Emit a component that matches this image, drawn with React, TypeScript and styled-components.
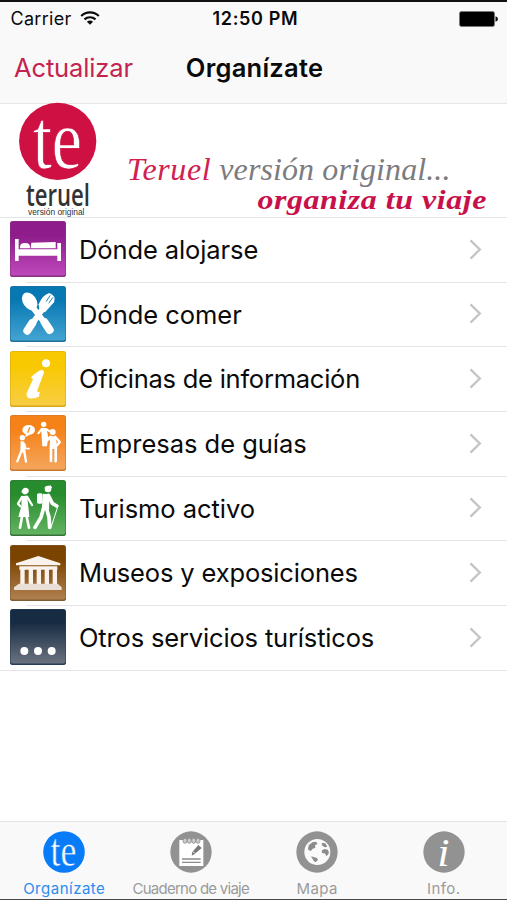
import React from 'react';
import styled, { createGlobalStyle } from 'styled-components';

const GlobalStyle = createGlobalStyle`
  * { box-sizing: border-box; }
  html, body { margin: 0; padding: 0; }
  body { background: #fff; font-family: Inter, 'Liberation Sans', sans-serif; color: #0a0a0a; }
  svg { display: block; flex: none; overflow: visible; }
`;

const Screen = styled.div`
  width: 507px;
  height: 900px;
  display: flex;
  flex-direction: column;
  overflow: hidden;
  background: #fff;
  border-top: 2px solid #141114;
  border-bottom: 1px solid #4a484a;
`;

const Header = styled.header`
  flex: none;
  height: 102px;
  background: #f9f9f9;
  border-bottom: 1px solid #e6e6e6;
`;

const StatusBar = styled.div`
  height: 32px;
  padding: 1px 9px 0 10.5px;
  display: grid;
  grid-template-columns: 202px 1fr auto;
  align-items: center;
`;

const Carrier = styled.div`
  display: flex;
  align-items: center;
  gap: 8px;
`;

const Label = styled.span<{ $size: number; $weight?: number; $spacing?: number; $color?: string }>`
  font-size: ${p => p.$size}px;
  font-weight: ${p => p.$weight ?? 400};
  letter-spacing: ${p => p.$spacing ?? 0}px;
  color: ${p => p.$color ?? '#0a0a0a'};
  line-height: 1.2;
  white-space: nowrap;
`;

const Battery = styled.div`
  justify-self: end;
`;

const NavBar = styled.div`
  height: 69px;
  padding: 0 12px 0 14px;
  display: grid;
  grid-template-columns: 1fr auto 1fr;
  align-items: center;
`;

const Banner = styled.section`
  flex: none;
  height: 114px;
  display: flex;
  border-bottom: 1px solid #e4e7e9;
`;

const Brand = styled.div`
  width: 127px;
  height: 113px;
  flex: none;
  padding-left: 15px;
  svg { margin-top: -2px; position: relative; }
`;

const Slogan = styled.div`
  flex: 1;
  padding-top: 50px;
  font-family: 'Liberation Serif', serif;
  font-style: italic;
`;

const SloganLine = styled.div<{ $strong?: boolean }>`
  line-height: 30px;
  height: ${p => (p.$strong ? 32 : 31)}px;
  font-size: ${p => (p.$strong ? 28 : 32)}px;
  font-weight: ${p => (p.$strong ? 700 : 400)};
  color: ${p => (p.$strong ? '#c8104a' : '#7c7c7f')};
  letter-spacing: ${p => (p.$strong ? 0.5 : 0.1)}px;
  text-align: ${p => (p.$strong ? 'right' : 'left')};
  padding-right: ${p => (p.$strong ? 20 : 0)}px;
  transform: ${p => (p.$strong ? 'scaleX(1.14)' : 'none')};
  transform-origin: 360px 50%;
  white-space: nowrap;
  em { color: #d1204f; letter-spacing: 0.6px; }
`;

const List = styled.ul`
  flex: 1;
  list-style: none;
  margin: 0;
  padding: 0;
`;

const Row = styled.li`
  height: 64.7px;
  padding: 0 25px 2.4px 10px;
  display: flex;
  align-items: center;
  gap: 13px;
  background: linear-gradient(#e4e4e6, #e4e4e6) 26px 100% / 100% 1px no-repeat;
  &:last-child { background-position: 0 100%; }
`;

const RowText = styled.div`
  flex: 1;
  padding-top: 2.2px;
`;

const Tile = styled.div<{ $top: string; $bottom: string; $edge: string }>`
  width: 56px;
  height: 56px;
  flex: none;
  border-radius: 3px;
  overflow: hidden;
  background: linear-gradient(${p => p.$top} 25%, ${p => p.$bottom});
  box-shadow: inset 0 0 0 1px ${p => p.$edge}88, inset 0 -1.5px 0 ${p => p.$edge};
`;

const TabBar = styled.nav`
  flex: none;
  height: 78px;
  padding-left: 1px;
  display: grid;
  grid-template-columns: repeat(4, 1fr);
  background: #f9f9f9;
  border-top: 1px solid #e2e2e2;
`;

const Tab = styled.div`
  display: flex;
  flex-direction: column;
  align-items: center;
  padding-top: 9px;
  gap: 7px;
`;

const Wifi = () => (
  <svg width="20" height="15" viewBox="0 0 20 15" fill="none" stroke="#0a0a0a" strokeWidth="2.2">
    <path d="M1.2 5C6.3 .2 13.7 .2 18.8 5" />
    <path d="M4.5 8.4C7.7 5.5 12.3 5.5 15.5 8.4" />
    <path d="M10 13.8 6.9 10.8Q10 8.4 13.1 10.8Z" fill="#0a0a0a" stroke="none" />
  </svg>
);

const BatteryIcon = () => (
  <svg width="39" height="16" viewBox="0 0 39 16">
    <rect x=".5" y=".5" width="35" height="15" rx="2" fill="#000" stroke="#777" />
    <path d="M36.5 5.2Q39 6 39 8T36.5 10.8Z" fill="#111" />
  </svg>
);

const Monogram = ({ size, color }: { size: number; color: string }) => (
  <svg width={size} height={size} viewBox="0 0 78 78">
    <circle cx="39" cy="39" r="38.6" fill={color} />
    <text transform="translate(14 65) scale(1 1.24)" fill="#fff" stroke={color} strokeWidth="0.8"
      fontFamily="'Liberation Serif', serif" fontSize="68" textLength="48" lengthAdjust="spacingAndGlyphs">te</text>
  </svg>
);

const Logo = () => (
  <svg width="84" height="115" viewBox="15 102 84 115">
    <circle cx="57.7" cy="141.3" r="38.6" fill="#cf1043" />
    <text transform="translate(33 167.5) scale(1 1.24)" fill="#fff" stroke="#cf1043" strokeWidth="0.6"
      fontFamily="'Liberation Serif', serif" fontSize="68" textLength="49" lengthAdjust="spacingAndGlyphs">te</text>
    <g fill="#333">
      <text x="26" y="206" fontFamily="'Open Sans', sans-serif" fontSize="31" fontWeight="600" textLength="64" lengthAdjust="spacingAndGlyphs">teruel</text>
      <text x="28" y="215" fontFamily="'Liberation Sans', sans-serif" fontSize="8.6" textLength="56.5" lengthAdjust="spacingAndGlyphs">versión original</text>
    </g>
  </svg>
);

const Art = ({ children }: { children: React.ReactNode }) => (
  <svg width="56" height="56" viewBox="0 0 168 168" fill="#fff" stroke="#fff" strokeWidth="0" strokeLinecap="round" strokeLinejoin="round">
    {children}
  </svg>
);

const Bed = () => (
  <Art>
    <path d="M15 54h11v31h116V66h11v54h-11v-16H26v16H15Z" />
    <path d="M64 65 137 63V82H62Z" />
    <path d="M30 82Q28 66 45 66T60 82Z" />
  </Art>
);

const Cutlery = () => (
  <Art>
    <ellipse cx="59" cy="46" rx="20" ry="29" transform="rotate(-34 59 46)" />
    <path d="M67 62 121 133" strokeWidth="17" />
    <path d="M119 132 104 109" strokeWidth="24" />
    <path d="M101 64 51 136" strokeWidth="17" />
    <path d="M52 134 67 111" strokeWidth="24" />
    <path d="M86 55Q97 27 118 21Q140 30 132 49L105 79Q87 78 86 55Z" />
    <path d="M109 46 120 29M117 51 128 35" stroke="#1787bd" strokeWidth="3" />
  </Art>
);

const InfoArt = () => (
  <Art>
    <circle cx="108" cy="37" r="12" />
    <path d="M63 79Q80 61 96 56L103 62 82 118Q79 124 89 123L87 137Q66 146 53 140L49 129 69 85Z" />
  </Art>
);

const Guides = () => (
  <Art>
    <ellipse cx="56" cy="45" rx="19" ry="15" /><path d="M47 57 46 67 59 59Z" />
    <path d="M59 38 54 52" stroke="#f28a2c" strokeWidth="4" />
    <circle cx="37" cy="68" r="8" />
    <path d="M32 78 43 80 47 112 31 113Z" /><path d="M44 87 47 100 57 101" strokeWidth="5" fill="none" />
    <path d="M33 111 22 139M43 111 48 140" strokeWidth="7" />
    <circle cx="101" cy="28" r="8" /><path d="M93 39H109L115 66 111 94H97Z" />
    <path d="M96 41 85 55M107 42 120 49" strokeWidth="6" />
    <circle cx="128" cy="51" r="9" /><path d="M120 64H137L142 102H119Z" />
    <path d="M122 66 111 76M136 66 149 81 142 90M123 101V138M137 101V139" strokeWidth="8" fill="none" />
  </Art>
);

const Hikers = () => (
  <Art>
    <path d="M34 36Q38 22 48 23T56 36Q49 46 40 42Z" />
    <path d="M35 48 51 47 55 79 58 111H25L34 78Z" />
    <path d="M36 51 24 71 31 79M51 50 66 75" strokeWidth="7" fill="none" />
    <path d="M36 110 30 143M50 110 57 143" strokeWidth="8" />
    <circle cx="114" cy="27" r="10" /><path d="M102 22 122 16 127 25Z" />
    <rect x="81" y="40" width="17" height="31" rx="5" />
    <path d="M99 41 119 43 117 89 95 90Z" />
    <path d="M115 46 127 70 140 78M100 87 93 112 75 142M110 87 117 112 119 142" strokeWidth="11" fill="none" />
    <path d="M144 78 123 142" strokeWidth="3" />
  </Art>
);

const Museum = () => (
  <Art>
    <g fill="#faf3ed">
      <path d="M18 55 85 33 151 55V61H18Z" />
      <path d="M28 64H142V74H28Z" />
      {[31, 56, 80, 104, 128].map(x => <path key={x} d={`M${x} 71h13v49h-13Z`} />)}
      <path d="M27 116H143L155 127V135H12V127Z" fill="#eadfd7" />
    </g>
  </Art>
);

const Dots = () => (
  <Art>
    {[43, 84, 125].map(x => <circle key={x} cx={x} cy="126" r="12" />)}
  </Art>
);

const Chevron = () => (
  <svg width="13" height="21" viewBox="0 0 13 21" fill="none" stroke="#c5c5c9" strokeWidth="2.4">
    <path d="M1.5 1.3 10.8 10.5 1.5 19.7" />
  </svg>
);

const NotebookIcon = () => (
  <svg width="42" height="42" viewBox="0 0 126 126">
    <circle cx="63" cy="63" r="62" fill="#929292" />
    <path d="M28 27H100V105H28Z" fill="#fff" />
    {[45, 58, 71, 84].map(x => (
      <ellipse key={x} cx={x} cy="29" rx="6" ry="8" fill="#ccc" stroke="#8b8b8b" strokeWidth="2.5" />
    ))}
    <path d="M67 63 85 42 95 51 75 68 65 74Z" fill="#777" />
    <path d="M68 62 77 67" stroke="#fff" strokeWidth="2" />
    <path d="M36 84H92M36 94H92" stroke="#8b8b8b" strokeWidth="4" />
  </svg>
);

const GlobeIcon = () => (
  <svg width="42" height="42" viewBox="0 0 126 126">
    <circle cx="63" cy="63" r="62" fill="#929292" />
    <circle cx="64" cy="63" r="39" fill="#fafafa" />
    <g fill="#8b8b8b">
      <path d="M36 56 38 43 49 34 60 32 65 39 57 42 58 50 49 54 45 60Z" />
      <path d="M45 76 63 81 66 87 58 94 52 88Z" />
      <path d="M77 36 88 37 94 47 87 49 79 44Z" />
      <path d="M77 59 85 54 96 56 99 66 92 76 86 67 79 67Z" />
    </g>
  </svg>
);

const InfoIcon = () => (
  <svg width="42" height="42" viewBox="0 0 126 126">
    <circle cx="63" cy="63" r="62" fill="#929292" />
    <text x="43" y="104" fill="#fff" fontFamily="'Liberation Serif', serif" fontStyle="italic" fontSize="122" textLength="37" lengthAdjust="spacingAndGlyphs">i</text>
  </svg>
);

const rows = [
  { text: 'Dónde alojarse', spacing: -0.1, top: '#8e1c8b', bottom: '#c04abc', edge: '#85327f', art: <Bed /> },
  { text: 'Dónde comer', spacing: -0.03, top: '#0878b3', bottom: '#46a6d2', edge: '#216f9b', art: <Cutlery /> },
  { text: 'Oficinas de información', spacing: -0.24, top: '#f8c900', bottom: '#f8cd45', edge: '#d3a914', art: <InfoArt /> },
  { text: 'Empresas de guías', spacing: -0.02, top: '#f58218', bottom: '#f5a760', edge: '#ca762f', art: <Guides /> },
  { text: 'Turismo activo', spacing: -0.05, top: '#278c2d', bottom: '#65b563', edge: '#38733a', art: <Hikers /> },
  { text: 'Museos y exposiciones', spacing: -0.15, top: '#7b4300', bottom: '#b18253', edge: '#825b34', art: <Museum /> },
  { text: 'Otros servicios turísticos', spacing: -0.16, top: '#172c43', bottom: '#6f7582', edge: '#273d56', art: <Dots /> },
];

const tabs = [
  { text: 'Organízate', spacing: 0.5, color: '#2b8cf0', icon: <Monogram size={42} color="#087cf8" /> },
  { text: 'Cuaderno de viaje', spacing: -0.75, color: '#9b9b9b', icon: <NotebookIcon /> },
  { text: 'Mapa', spacing: 0.4, color: '#9b9b9b', icon: <GlobeIcon /> },
  { text: 'Info.', spacing: 0.4, color: '#9b9b9b', icon: <InfoIcon /> },
];

export default function App() {
  return (
    <>
      <GlobalStyle />
      <Screen>
        <Header>
          <StatusBar>
            <Carrier>
              <Label $size={18} $spacing={0.3}>Carrier</Label>
              <Wifi />
            </Carrier>
            <Label $size={18} $weight={600} $spacing={0.65}>12:50 PM</Label>
            <Battery><BatteryIcon /></Battery>
          </StatusBar>
          <NavBar>
            <Label $size={25.5} $color="#c42350" $spacing={-0.13}>Actualizar</Label>
            <Label $size={25.5} $weight={600} $spacing={0.25}>Organízate</Label>
          </NavBar>
        </Header>
        <Banner>
          <Brand><Logo /></Brand>
          <Slogan>
            <SloganLine><em>Teruel</em> versión original...</SloganLine>
            <SloganLine $strong>organiza tu viaje</SloganLine>
          </Slogan>
        </Banner>
        <List>
          {rows.map(r => (
            <Row key={r.text}>
              <Tile $top={r.top} $bottom={r.bottom} $edge={r.edge}>{r.art}</Tile>
              <RowText><Label $size={25.5} $spacing={r.spacing}>{r.text}</Label></RowText>
              <Chevron />
            </Row>
          ))}
        </List>
        <TabBar>
          {tabs.map(t => (
            <Tab key={t.text}>
              {t.icon}
              <Label $size={15} $spacing={t.spacing} $color={t.color}>{t.text}</Label>
            </Tab>
          ))}
        </TabBar>
      </Screen>
    </>
  );
}
